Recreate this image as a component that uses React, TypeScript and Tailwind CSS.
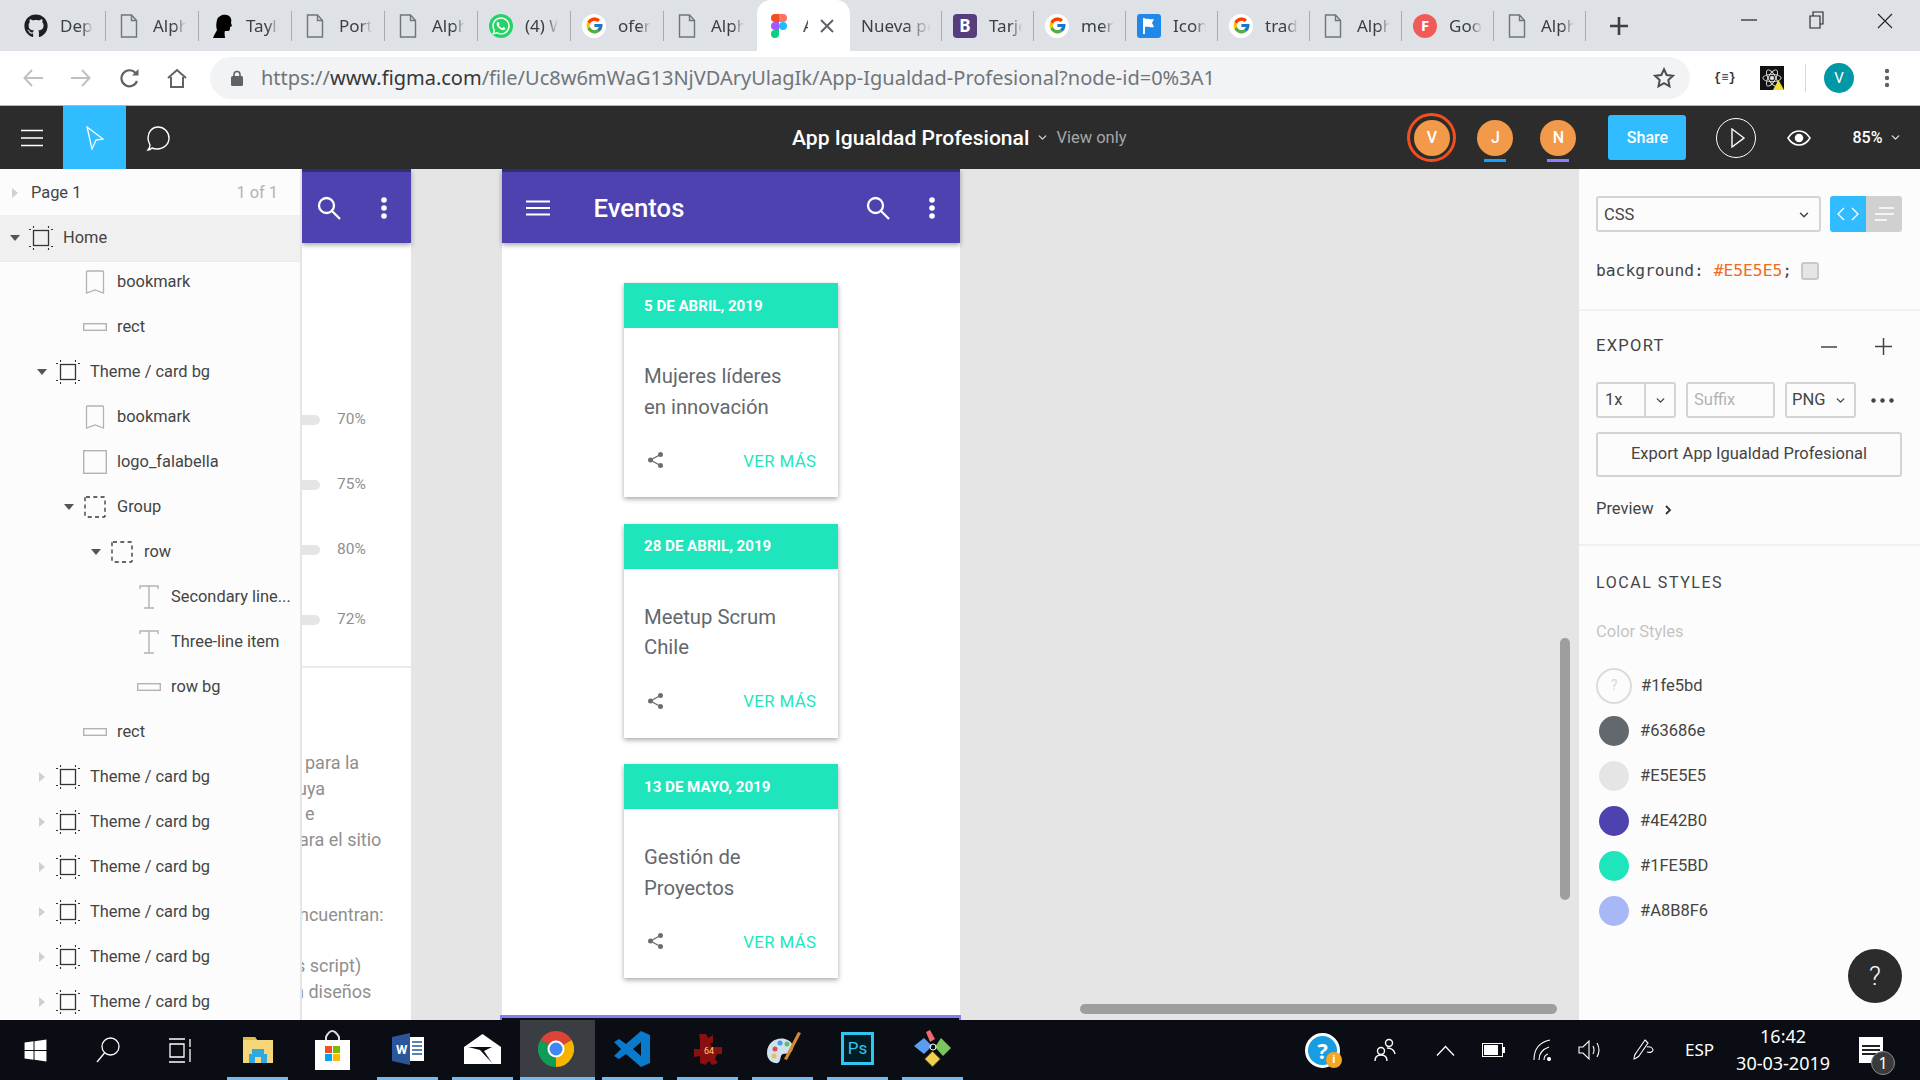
import React from "react";
import { FaGithub, FaWhatsapp, FaWindows } from "react-icons/fa";
import { FcGoogle } from "react-icons/fc";
import { ChevronDown } from "lucide-react";

const FileIco = () => (
  <svg width="18" height="24" viewBox="0 0 18 24" fill="none" stroke="#70757a" strokeWidth="1.4" className="ml-[3px] mr-[3px]">
    <path d="M1.5 1h10l5 5.500V23h-15z" /><path d="M11.500 1v5.500h5" />
  </svg>
);
const G = () => (<span className="flex h-6 w-6 items-center justify-center rounded-full bg-white"><FcGoogle size={19} /></span>);
const Figma = () => (
  <svg width="24" height="24" viewBox="0 0 16 24">
    <path d="M8 0H4a4 4 0 0 0 0 8h4z" fill="#f24e1e" /><path d="M8 0h4a4 4 0 0 1 0 8H8z" fill="#ff7262" />
    <path d="M8 8H4a4 4 0 0 0 0 8h4z" fill="#a259ff" /><circle cx="12" cy="12" r="4" fill="#1abcfe" />
    <path d="M8 16H4a4 4 0 1 0 4 4z" fill="#0acf83" />
  </svg>
);
const Silhouette = () => (
  <svg width="24" height="24" viewBox="0 0 24 24"><path d="M3 24c1-3 3-6 4-8-1-3-1-6 0-10 1-4 6-6 10-5 4 1 5 5 4 8l1 3-2 1c0 2 0 4-2 4h-3c-1 2 0 5 0 7z" fill="#000" /></svg>
);

type Tab = { icon: React.ReactNode; title: string };
const leftTabs: Tab[] = [
  { icon: <FaGithub size={24} color="#1b1f23" />, title: "Dependabot" },
  { icon: <FileIco />, title: "Alpha" },
  { icon: <Silhouette />, title: "Taylor" },
  { icon: <FileIco />, title: "Portafolio" },
  { icon: <FileIco />, title: "Alpha" },
  { icon: <span className="flex h-6 w-6 items-center justify-center rounded-full bg-[#25d366]"><FaWhatsapp size={20} color="#fff" /></span>, title: "(4) WhatsApp" },
  { icon: <G />, title: "oferta" },
  { icon: <FileIco />, title: "Alpha" },
];
const rightTabs: Tab[] = [
  { icon: <span className="flex h-6 w-6 items-center justify-center rounded-[4px] bg-[#563d7c] text-[17px] font-bold text-white">B</span>, title: "Tarjetas" },
  { icon: <G />, title: "mermaid" },
  { icon: <span className="flex h-6 w-6 items-center justify-center rounded-[3px] bg-[#2088e8]"><svg width="16" height="18" viewBox="0 0 16 18" fill="#fff"><path d="M2 1h2v16H2z" /><path d="M4 2c3-1 5 1 9 0l-2 4 2 4c-4 1-6-1-9 0z" /></svg></span>, title: "Icons" },
  { icon: <G />, title: "traducir" },
  { icon: <FileIco />, title: "Alpha" },
  { icon: <span className="flex h-6 w-6 items-center justify-center rounded-full bg-[#f25a5a] text-[15px] font-bold text-white">F</span>, title: "Google" },
  { icon: <FileIco />, title: "Alpha" },
];

const TabTitle = ({ t }: { t: string }) => (
  <span className="w-[33px] overflow-hidden whitespace-nowrap text-[17px] text-[#3c4043] [mask-image:linear-gradient(to_right,black_65%,transparent)]">{t}</span>
);

function TabStrip() {
  return (
    <div className="flex h-[51px] items-end bg-[#dee1e6] pl-[13px] font-[family-name:'Noto_Sans',sans-serif]">
      {leftTabs.map((t, i) => (
        <div key={i} className="relative flex h-[51px] w-[93px] items-center gap-[12px] pl-[11px]">
          {t.icon}
          <TabTitle t={t.title} />
          {i < 7 && <span className="absolute right-0 top-[11px] h-[30px] w-[1.5px] bg-[#a9acb0]" />}
        </div>
      ))}
      <div className="flex h-[51px] w-[93px] items-center rounded-t-[14px] bg-white pl-[10px]">
        <Figma />
        <span className="ml-[12px] w-[5px] overflow-hidden text-[17px] text-[#3c4043]">A</span>
        <svg width="14" height="14" viewBox="0 0 14 14" stroke="#5f6368" strokeWidth="2" className="ml-[12px]"><path d="M1 1l12 12M13 1L1 13" /></svg>
      </div>
      <div className="relative flex h-[51px] w-[92px] items-center pl-[11px]">
        <span className="w-[70px] overflow-hidden whitespace-nowrap text-[17px] text-[#3c4043] [mask-image:linear-gradient(to_right,black_65%,transparent)]">Nueva pestaña</span>
        <span className="absolute right-0 top-[11px] h-[30px] w-[1.5px] bg-[#a9acb0]" />
      </div>
      {rightTabs.map((t, i) => (
        <div key={i} className="relative flex h-[51px] w-[92px] items-center gap-[12px] pl-[11px]">
          {t.icon}
          <TabTitle t={t.title} />
          <span className="absolute right-0 top-[11px] h-[30px] w-[1.5px] bg-[#a9acb0]" />
        </div>
      ))}
      <svg width="20" height="20" viewBox="0 0 20 20" stroke="#3c4043" strokeWidth="2.600" className="mb-[15px] ml-[23px]"><path d="M10 1v18M1 10h18" /></svg>
      <svg width="16" height="2" viewBox="0 0 16 2" className="mb-[30px] ml-[112px]"><path d="M0 1h16" stroke="#222" strokeWidth="1.200" /></svg>
      <svg width="16" height="18" viewBox="0 0 16 18" fill="none" stroke="#222" strokeWidth="1.100" className="mb-[22px] ml-[52px]"><path d="M1 5h10v12H1zM4 5V1h10v12h-3" /></svg>
      <svg width="16" height="16" viewBox="0 0 16 16" stroke="#222" strokeWidth="1.100" className="mb-[22px] ml-[52px]"><path d="M1 1l14 14M15 1L1 15" /></svg>
    </div>
  );
}

function AddressBar() {
  return (
    <div className="flex h-[55px] items-center border-b border-[#b5b5b5] bg-white">
      <svg width="20" height="18" viewBox="0 0 20 18" fill="none" stroke="#bdc1c6" strokeWidth="2" className="ml-[23px]"><path d="M20 9H2M9 1L1.500 9 9 17" /></svg>
      <svg width="20" height="18" viewBox="0 0 20 18" fill="none" stroke="#bdc1c6" strokeWidth="2" className="ml-[28px]"><path d="M0 9h18M11 1l7.500 8-7.500 8" /></svg>
      <svg width="21" height="21" viewBox="0 0 21 21" fill="none" stroke="#5f6368" strokeWidth="2.200" className="ml-[28px]"><path d="M18 13a8 8 0 1 1-1.500-8" /><path d="M19.500 1v6.500H13z" fill="#5f6368" stroke="none" /></svg>
      <svg width="20" height="20" viewBox="0 0 20 20" fill="none" stroke="#5f6368" strokeWidth="2" className="ml-[27px]"><path d="M1 10l9-8 9 8M4 9v10h12V9" /></svg>
      <div className="ml-[23px] flex h-[42px] w-[1480px] items-center rounded-full bg-[#f1f3f4] pl-[21px]">
        <svg width="12" height="16" viewBox="0 0 12 16"><path d="M3 7V4.500a3 3 0 0 1 6 0V7" fill="none" stroke="#5f6368" strokeWidth="1.600" /><rect x="0" y="6" width="12" height="10" rx="1.500" fill="#5f6368" /></svg>
        <span className="ml-[18px] whitespace-nowrap text-[20px] text-[#70757a] font-[family-name:'Noto_Sans',sans-serif]">
          https://<span className="text-[#35373a]">www.figma.com</span>/file/Uc8w6mWaG13NjVDAryUlagIk/App-Igualdad-Profesional?node-id=0%3A1
        </span>
        <svg width="22" height="22" viewBox="0 0 24 24" fill="none" stroke="#4a4d51" strokeWidth="2.200" className="ml-auto mr-[15px]"><path d="M12 2.500l2.900 6.300 6.800.8-5 4.700 1.300 6.800-6-3.400-6 3.400 1.300-6.800-5-4.700 6.800-.8z" /></svg>
      </div>
      <span className="ml-[24px] w-[20px] text-center text-[12px] font-bold text-[#333] font-[family-name:'Liberation_Mono',monospace]">{"{≡}"}</span>
      <span className="relative ml-[26px] flex h-[24px] w-[24px] items-center justify-center bg-[#111]">
        <svg width="22" height="22" viewBox="0 0 24 24" fill="none" stroke="#ddd" strokeWidth="1"><ellipse cx="12" cy="12" rx="10" ry="4" /><ellipse cx="12" cy="12" rx="10" ry="4" transform="rotate(60 12 12)" /><ellipse cx="12" cy="12" rx="10" ry="4" transform="rotate(120 12 12)" /><circle cx="12" cy="12" r="2" fill="#ddd" /></svg>
        <svg width="11" height="10" viewBox="0 0 11 10" className="absolute bottom-0 right-0"><path d="M5.500 0L11 10H0z" fill="#f5dd3a" /></svg>
      </span>
      <span className="ml-[21px] h-[28px] w-px bg-[#d8d8d8]" />
      <span className="ml-[18px] flex h-[30px] w-[30px] items-center justify-center rounded-full bg-[#0097a7] text-[15px] text-white">V</span>
      <svg width="6" height="20" viewBox="0 0 6 20" fill="#5f6368" className="ml-[30px]"><circle cx="3" cy="3" r="2.200" /><circle cx="3" cy="10" r="2.200" /><circle cx="3" cy="17" r="2.200" /></svg>
    </div>
  );
}

const Avatar = ({ l, bar }: { l: string; bar: string }) => (
  <div className="relative flex h-9 w-9 items-center justify-center rounded-full bg-[#f2994a] text-[16px] font-medium text-white">
    {l}
    <span className={`absolute -bottom-[6px] left-[7px] h-[3px] w-[22px] ${bar}`} />
  </div>
);

function FigmaBar() {
  return (
    <div className="flex h-[63px] items-center bg-[#2c2c2c] text-white">
      <svg width="22" height="18" viewBox="0 0 22 18" stroke="#fff" strokeWidth="1.400" className="ml-[21px]"><path d="M0 1.500h22M0 9h22M0 16.500h22" /></svg>
      <div className="ml-[20px] flex h-full w-[63px] items-center justify-center bg-[#30bcff]">
        <svg width="20" height="24" viewBox="0 0 20 24" fill="none" stroke="#fff" strokeWidth="1.300"><path d="M2 1l16 12-7 1-4 9z" /></svg>
      </div>
      <svg width="26" height="26" viewBox="0 0 26 26" fill="none" stroke="#fff" strokeWidth="1.400" className="ml-[19px]"><path d="M3 25c2 0 3-1 4-2 2 1 3 1 5 1 7 0 12-5 12-11S19 2 13 2 3 7 3 13c0 3 1 5 2 7 0 2-1 4-2 5z" /></svg>
      <span className="ml-[621px] whitespace-nowrap text-[21.100px] font-medium">App Igualdad Profesional</span>
      <ChevronDown size={13} strokeWidth={2.500} className="ml-[7px] text-[#cfcfcf]" />
      <span className="ml-[7px] mt-[1px] text-[16.500px] text-[#a6a6a6]">View only</span>
      <div className="ml-[281px] flex h-[49px] w-[49px] items-center justify-center rounded-full border-[3px] border-[#f24e1e]">
        <div className="flex h-9 w-9 items-center justify-center rounded-full bg-[#f2994a] text-[16px] font-medium text-white">V</div>
      </div>
      <div className="ml-[21px]"><Avatar l="J" bar="bg-[#18a0fb]" /></div>
      <div className="ml-[27px]"><Avatar l="N" bar="bg-[#907cff]" /></div>
      <div className="ml-[32px] flex h-[45px] w-[78px] items-center justify-center rounded-[3px] bg-[#30bcff] text-[16px] font-medium">Share</div>
      <div className="ml-[30px] flex h-[40px] w-[40px] items-center justify-center rounded-full border-[1.500px] border-white">
        <svg width="14" height="20" viewBox="0 0 14 20" fill="none" stroke="#fff" strokeWidth="1.400" className="ml-[3px]"><path d="M1 1l12 9-12 9z" /></svg>
      </div>
      <svg width="24" height="18" viewBox="0 0 24 18" fill="none" stroke="#fff" strokeWidth="1.500" className="ml-[31px]"><path d="M1 9c3-5 7-7 11-7s8 2 11 7c-3 5-7 7-11 7S4 14 1 9z" /><circle cx="12" cy="9" r="3.500" fill="#fff" /></svg>
      <span className="ml-[41px] text-[16px] font-medium">85%</span>
      <ChevronDown size={13} strokeWidth={2.500} className="ml-[7px] text-[#dcdcdc]" />
    </div>
  );
}

type Kind = "frame" | "book" | "rect" | "img" | "group" | "text";
const LayerIcon = ({ k }: { k: Kind }) => {
  if (k === "frame")
    return (
      <svg width="24" height="24" viewBox="0 0 24 24" fill="none" stroke="#333">
        <rect x="4.500" y="4.500" width="15" height="15" strokeWidth="1.300" />
        <path d="M0 3.500h2M22 3.500h2M0 20.500h2M22 20.500h2M4.500 0v2M19.500 0v2M4.500 22v2M19.500 22v2" strokeWidth="1.100" />
      </svg>
    );
  if (k === "book") return <svg width="20" height="24" viewBox="0 0 20 24" fill="none" stroke="#b3b3b3" strokeWidth="1.300"><path d="M1.500 2q0-1 1-1h15q1 0 1 1v21l-8.500-3-8.500 3z" /></svg>;
  if (k === "rect") return <svg width="24" height="8" viewBox="0 0 24 8" fill="none" stroke="#b3b3b3" strokeWidth="1.400"><rect x="0.700" y="0.700" width="22.600" height="6.600" /></svg>;
  if (k === "img") return <svg width="24" height="24" viewBox="0 0 24 24" fill="none" stroke="#b3b3b3" strokeWidth="1.400"><rect x="0.700" y="0.700" width="22.600" height="22.600" /></svg>;
  if (k === "group") return <svg width="22" height="22" viewBox="0 0 22 22" fill="none" stroke="#333" strokeWidth="1.300" strokeDasharray="4 3.300"><rect x="1" y="1" width="20" height="20" rx="1" /></svg>;
  return <svg width="20" height="24" viewBox="0 0 20 24" fill="none" stroke="#b3b3b3" strokeWidth="1.400"><path d="M1 4V1h18v3M10 1v22M5 23h10" /></svg>;
};

const depths = ["pl-[3px]", "pl-[30px]", "pl-[57px]", "pl-[84px]", "pl-[111px]"];
type Row = { d: number; k: Kind; t: string; a?: "open" | "closed" };
const rows: Row[] = [
  { d: 2, k: "book", t: "bookmark" },
  { d: 2, k: "rect", t: "rect" },
  { d: 1, k: "frame", t: "Theme / card bg", a: "open" },
  { d: 2, k: "book", t: "bookmark" },
  { d: 2, k: "img", t: "logo_falabella" },
  { d: 2, k: "group", t: "Group", a: "open" },
  { d: 3, k: "group", t: "row", a: "open" },
  { d: 4, k: "text", t: "Secondary line..." },
  { d: 4, k: "text", t: "Three-line item" },
  { d: 4, k: "rect", t: "row bg" },
  { d: 2, k: "rect", t: "rect" },
  ...Array.from({ length: 6 }, () => ({ d: 1, k: "frame" as Kind, t: "Theme / card bg", a: "closed" as const })),
];

const Arrow = ({ a }: { a?: "open" | "closed" }) => (
  <span className="flex w-[24px] justify-center">
    {a === "open" && <svg width="10" height="6" viewBox="0 0 10 6"><path d="M0 0h10L5 6z" fill="#555" /></svg>}
    {a === "closed" && <svg width="6" height="10" viewBox="0 0 6 10"><path d="M0 0v10l6-5z" fill="#d0d0d0" /></svg>}
  </span>
);

function LeftPanel() {
  return (
    <div className="relative z-10 w-[302px] shrink-0 overflow-hidden border-r-2 border-[#e5e5e5] bg-[#fcfcfc] text-[16.400px] text-[#444]">
      <div className="flex h-[46px] items-center pl-[3px] pt-[2px]">
        <Arrow a="closed" />
        <span className="ml-[4px]">Page 1</span>
        <span className="ml-auto mr-[22px] text-[#b3b3b3]">1 of 1</span>
      </div>
      <div className="-mb-[3px] flex h-[47px] items-center border-b border-[#ebebeb] bg-[#f0f0f0] pl-[3px]">
        <Arrow a="open" />
        <span className="flex w-[28px] justify-center"><LayerIcon k="frame" /></span>
        <span className="ml-[8px] mt-[1px]">Home</span>
      </div>
      {rows.map((r, i) => (
        <div key={i} className={`flex h-[45px] items-center ${depths[r.d]}`}>
          <Arrow a={r.a} />
          <span className="flex w-[28px] justify-center"><LayerIcon k={r.k} /></span>
          <span className="ml-[8px] mt-[2px] whitespace-nowrap">{r.t}</span>
        </div>
      ))}
    </div>
  );
}

const Search = () => (
  <svg width="24" height="24" viewBox="0 0 24 24" fill="none" stroke="#fff" strokeWidth="2.300"><circle cx="9.500" cy="9.500" r="7.500" /><path d="M15 15l8 8" /></svg>
);
const Dots = () => (
  <svg width="6" height="22" viewBox="0 0 6 22" fill="#fff"><circle cx="3" cy="3" r="2.800" /><circle cx="3" cy="11" r="2.800" /><circle cx="3" cy="19" r="2.800" /></svg>
);

const Pct = ({ v, cls }: { v: string; cls: string }) => (
  <div className={`flex h-[20px] items-center ${cls}`}>
    <span className="h-[10px] w-[18px] rounded-r-full bg-[#e5e5e5]" />
    <span className="ml-[17px] text-[15.500px] text-[#8f8f8f]">{v}</span>
  </div>
);

const Card = ({ date, l1, l2 }: { date: string; l1: string; l2: string }) => (
  <div className="mb-[26.500px] h-[214px] w-[214px] bg-white shadow-[0_2px_5px_rgba(0,0,0,0.35)]">
    <div className="flex h-[45px] items-center bg-[#1fe5bd] pl-[20.500px] pt-[1px] text-[15.100px] font-bold text-white">{date}</div>
    <div className="pl-[20.500px] pt-[33px] text-[20.300px] leading-[30.600px] text-[#63686e]">
      <div>{l1}</div>
      <div>{l2}</div>
    </div>
    <div className="mt-[26.500px] flex items-center pl-[24px] pr-[21px]">
      <svg width="15" height="16" viewBox="0 0 15 16" fill="#6b6f73" className="-mt-[2px]"><circle cx="12.500" cy="2.500" r="2.500" /><circle cx="2.500" cy="8" r="2.500" /><circle cx="12.500" cy="13.500" r="2.500" /><path d="M12.500 2.500L2.500 8l10 5.500" fill="none" stroke="#6b6f73" strokeWidth="1.400" /></svg>
      <span className="ml-auto text-[16.800px] tracking-[0.4px] text-[#1fe5bd]">VER MÁS</span>
    </div>
  </div>
);

function Canvas() {
  return (
    <div className="relative min-w-0 flex-1 overflow-hidden bg-[#e5e5e5]">
      {/* artboard cut off by the layers panel */}
      <div className="absolute left-0 top-0 h-full w-[109px] bg-white">
        <div className="flex h-[74px] items-center border-t-[3px] border-[#332c7a] bg-[#4e42b0] pl-[15px] shadow-[0_2px_5px_rgba(0,0,0,0.35)]">
          <Search />
          <span className="ml-[40px]"><Dots /></span>
        </div>
        <Pct v="70%" cls="mt-[167px]" />
        <Pct v="75%" cls="mt-[45px]" />
        <Pct v="80%" cls="mt-[45px]" />
        <Pct v="72%" cls="mt-[50px]" />
        <div className="mt-[36px] h-[2px] bg-[#ebebeb]" />
        <div className="relative overflow-hidden pl-[3px] pt-[81px] text-[18px] text-[#8f8f8f]">
          <div className="h-[25.500px] whitespace-nowrap">para la</div>
          <div className="-ml-[8px] h-[25.500px] whitespace-nowrap">uya</div>
          <div className="h-[25.500px]">e</div>
          <div className="-ml-[6px] h-[25.500px] whitespace-nowrap">ara el sitio</div>
          <div className="-ml-[6px] mt-[50px] h-[25.500px] whitespace-nowrap">ncuentran:</div>
          <div className="-ml-[9px] mt-[25.500px] h-[25.500px] whitespace-nowrap">s script)</div>
          <div className="-ml-[11px] h-[25.500px] whitespace-nowrap">n diseños</div>
        </div>
      </div>
      {/* main artboard */}
      <div className="absolute left-[199.500px] top-0 h-full w-[458px] bg-white">
        <div className="flex h-[74px] items-center border-t-[3px] border-[#332c7a] bg-[#4e42b0] pt-[1px] shadow-[0_2px_5px_rgba(0,0,0,0.35)]">
          <svg width="24" height="16" viewBox="0 0 24 16" stroke="#fff" strokeWidth="2" className="ml-[24px]"><path d="M0 1.500h24M0 8h24M0 14.500h24" /></svg>
          <span className="ml-[44px] text-[25.700px] font-medium text-white">Eventos</span>
          <span className="ml-auto"><Search /></span>
          <span className="ml-[39px] mr-[25px]"><Dots /></span>
        </div>
        <div className="flex flex-col items-center pt-[40px]">
          <Card date="5 DE ABRIL, 2019" l1="Mujeres líderes" l2="en innovación" />
          <Card date="28 DE ABRIL, 2019" l1="Meetup Scrum" l2="Chile" />
          <Card date="13 DE MAYO, 2019" l1="Gestión de" l2="Proyectos" />
        </div>
      </div>
      <div className="absolute bottom-0 left-[198px] h-[5px] w-[461px] border-t-[3px] border-x-2 border-[#8a7bf5] bg-[#0a0d14]" />
      <div className="absolute left-[1258px] top-[469px] h-[262px] w-[10px] rounded-full bg-[#9e9e9e]" />
      <div className="absolute left-[778px] top-[835px] h-[10px] w-[477px] rounded-full bg-[#9e9e9e]" />
    </div>
  );
}

const Swatch = ({ c, t }: { c: string; t: string }) => (
  <div className="flex h-[45px] items-center">
    <span className={`ml-[3px] h-[30px] w-[30px] rounded-full ${c}`} />
    <span className="ml-[11px] mt-[1px]">{t}</span>
  </div>
);
const Field = "flex h-[36px] items-center rounded-[3px] border-2 border-[#d4d4d4]";

function RightPanel() {
  return (
    <div className="relative w-[341px] shrink-0 bg-[#fcfcfc] text-[16.500px] text-[#444]">
      <div className="h-[142px] border-b-2 border-[#f0f0f0] pl-[17px] pt-[27px]">
        <div className="flex">
          <div className={`${Field} w-[225px] pl-[6px] pr-[8px] pt-[2px]`}>
            CSS
            <ChevronDown size={14} strokeWidth={2.500} className="ml-auto" />
          </div>
          <div className="ml-[9px] flex h-[36px] w-[72px] overflow-hidden rounded-[3px]">
            <div className="flex w-[36px] items-center justify-center bg-[#30bcff]">
              <svg width="22" height="14" viewBox="0 0 22 14" fill="none" stroke="#fff" strokeWidth="1.300"><path d="M7 1L1 7l6 6M15 1l6 6-6 6" /></svg>
            </div>
            <div className="flex w-[36px] items-center justify-center bg-[#d0d0d0]">
              <svg width="19" height="14" viewBox="0 0 19 14" stroke="#fff" strokeWidth="1.300"><path d="M4 1h15M0 7h19M0 13h12" /></svg>
            </div>
          </div>
        </div>
        <div className="mt-[30px] flex h-[18px] items-center whitespace-pre text-[16.300px] text-[#444] font-[family-name:'DejaVu_Sans_Mono',monospace]">
          {"background: "}<span className="text-[#f26a21]">#E5E5E5</span>;
          <span className="ml-[9px] h-[18px] w-[18px] rounded-[3px] border-2 border-[#c8c8c8] bg-[#e5e5e5]" />
        </div>
      </div>
      <div className="h-[235px] border-b-2 border-[#f0f0f0] pl-[17px]">
        <div className="flex h-[71px] items-center">
          <span className="tracking-[1.300px]">EXPORT</span>
          <svg width="16" height="2" viewBox="0 0 16 2" className="ml-[156px]"><path d="M0 1h16" stroke="#444" strokeWidth="1.500" /></svg>
          <svg width="17" height="17" viewBox="0 0 17 17" stroke="#444" strokeWidth="1.500" className="ml-[38px]"><path d="M8.500 0v17M0 8.500h17" /></svg>
        </div>
        <div className="flex h-[36px] items-center">
          <div className={`${Field} w-[80px]`}>
            <span className="w-[48px] border-r-2 border-[#d4d4d4] pl-[7px] leading-[32px]">1x</span>
            <ChevronDown size={13} strokeWidth={2.500} className="ml-[8px]" />
          </div>
          <div className={`${Field} ml-[10px] w-[89px] pl-[6px] text-[#b3b3b3]`}>Suffix</div>
          <div className={`${Field} ml-[10px] w-[71px] pl-[5px]`}>
            PNG
            <ChevronDown size={13} strokeWidth={2.500} className="ml-[9px]" />
          </div>
          <svg width="23" height="5" viewBox="0 0 23 5" fill="#444" className="ml-[15px]"><circle cx="2.500" cy="2.500" r="2.200" /><circle cx="11.500" cy="2.500" r="2.200" /><circle cx="20.500" cy="2.500" r="2.200" /></svg>
        </div>
        <div className="mt-[14px] flex h-[45px] w-[306px] items-center justify-center rounded-[3px] border-2 border-[#d4d4d4]">Export App Igualdad Profesional</div>
        <div className="mt-[18px] flex h-[28px] items-center">
          Preview
          <svg width="7" height="10" viewBox="0 0 7 10" fill="none" stroke="#333" strokeWidth="1.800" className="ml-[11px] mt-[2px]"><path d="M1 1l4 4-4 4" /></svg>
        </div>
      </div>
      <div className="pl-[17px] pt-[23px]">
        <div className="text-[16px] leading-[28px] tracking-[1.550px]">LOCAL STYLES</div>
        <div className="mt-[21px] leading-[28px] text-[#c4c4c4]">Color Styles</div>
        <div className="mt-[17px]">
          <div className="flex h-[45px] items-center">
            <span className="flex h-9 w-9 items-center justify-center rounded-full border-2 border-[#dcdcdc] text-[14px] text-[#d8d8d8]">?</span>
            <span className="ml-[9px] mt-[1px]">#1fe5bd</span>
          </div>
          <Swatch c="bg-[#63686e]" t="#63686e" />
          <Swatch c="bg-[#e5e5e5]" t="#E5E5E5" />
          <Swatch c="bg-[#4e42b0]" t="#4E42B0" />
          <Swatch c="bg-[#1fe5bd]" t="#1FE5BD" />
          <Swatch c="bg-[#a8b8f6]" t="#A8B8F6" />
        </div>
      </div>
      <div className="absolute bottom-[17px] left-[269px] flex h-[54px] w-[54px] items-center justify-center rounded-full bg-[#2c2c2c] text-[26px] font-light text-white">?</div>
    </div>
  );
}

const Cell = ({ children }: { children: React.ReactNode }) => (
  <div className="flex h-full w-[75px] items-center justify-center">
    <div className="flex h-full w-[61px] items-center justify-center border-b-[3px] border-[#76b9ed]">{children}</div>
  </div>
);

function Taskbar() {
  return (
    <div className="flex h-[60px] items-center bg-[#0a0d14] text-white font-[family-name:'Noto_Sans',sans-serif]">
      <span className="ml-[23px]"><FaWindows size={25} /></span>
      <svg width="24" height="26" viewBox="0 0 24 26" fill="none" stroke="#fff" strokeWidth="1.300" className="ml-[48px]"><circle cx="14.500" cy="9.500" r="8.500" /><path d="M8.500 16L1 25" /></svg>
      <svg width="24" height="26" viewBox="0 0 24 26" fill="none" stroke="#fff" strokeWidth="1.300" className="ml-[48px]"><path d="M1 2h16M1 25h16M2 7h14v13H2zM22 2v8M22 12v13" /></svg>
      <div className="ml-[28px] flex h-full">
        <Cell>
          <svg width="32" height="32" viewBox="0 0 32 32"><path d="M1 4h12l2 3h16v23H1z" fill="#f5d77a" /><path d="M1 4h12l2 3H1z" fill="#e8b93e" /><path d="M10 16h12v5h3v9h-6v-6h-6v6H7v-9h3z" fill="#2fa8e0" /></svg>
        </Cell>
        <div className="flex h-full w-[75px] items-center justify-center">
          <svg width="35" height="40" viewBox="0 0 35 40"><path d="M11 11V7q6-12 13 0v4" fill="none" stroke="#ddd" strokeWidth="2" /><path d="M0 10h35v30H0z" fill="#fff" /><path d="M10 16h7v7h-7z" fill="#f25022" /><path d="M18 16h7v7h-7z" fill="#7fba00" /><path d="M10 24h7v7h-7z" fill="#00a4ef" /><path d="M18 24h7v7h-7z" fill="#ffb900" /></svg>
        </div>
        <Cell>
          <svg width="32" height="32" viewBox="0 0 32 32"><path d="M18 0v32L0 28V4z" fill="#2b579a" /><path d="M18 4h14v24H18z" fill="#fff" /><path d="M20 9h10M20 13h10M20 17h10M20 21h10" stroke="#2b579a" strokeWidth="1.600" /><text x="4" y="21" fontSize="13" fontWeight="700" fill="#fff" fontFamily="Roboto">W</text></svg>
        </Cell>
        <Cell>
          <svg width="37" height="30" viewBox="0 0 37 30"><path d="M18.500 0L37 13v17H0V13z" fill="#fff" /><path d="M4 13h24l-8 4 8 12-12-13z" fill="#0a0d14" /></svg>
        </Cell>
        <div className="flex h-full w-[75px] items-center justify-center border-b-[3px] border-[#76b9ed] bg-[#3a3d42] pr-[3px]">
          <svg width="36" height="36" viewBox="2 2 36 36">
            <path d="M20 20L4.400 11A18 18 0 0 1 35.600 11Z" fill="#db4437" /><path d="M20 20L35.600 11A18 18 0 0 1 20 38Z" fill="#f4b400" /><path d="M20 20L20 38A18 18 0 0 1 4.400 11Z" fill="#0f9d58" />
            <circle cx="20" cy="20" r="8.500" fill="#fff" /><circle cx="20" cy="20" r="6.500" fill="#4285f4" />
          </svg>
        </div>
        <Cell>
          <svg width="37" height="36" viewBox="0 0 37 36" fill="#0a7acc"><path d="M27 0l9 4v28l-9 4-15-13-7 5-5-3 7-7-7-7 5-3 7 5zM27 11l-8 7 8 7z" fillRule="evenodd" /></svg>
        </Cell>
        <Cell>
          <svg width="34" height="36" viewBox="0 0 34 36"><path d="M8 3h7l2 4 5-3v8h-3l2 4h10v7h-5l-2 5 3 4-6 2-3-4-4 4-5-2v-7l-6 1v-8h6V9z" fill="#8a1010" /><text x="13" y="23" fontSize="9" fill="#f5d76e" fontFamily="Roboto">64</text></svg>
        </Cell>
        <Cell>
          <svg width="36" height="36" viewBox="0 0 36 36"><path d="M2 22C2 11 12 6 20 8c8 2 10 9 6 13-3 3-8 0-10 4-1 4-1 8-6 7-5-1-8-5-8-10z" fill="#cfe2ee" /><circle cx="10" cy="18" r="2.500" fill="#e04b4b" /><circle cx="15" cy="12" r="2.500" fill="#4b9be0" /><circle cx="22" cy="13" r="2.500" fill="#5cc06a" /><circle cx="9" cy="25" r="2.500" fill="#e8c24b" /><path d="M33 1l3 1-14 27-3-1z" fill="#d98a2b" /></svg>
        </Cell>
        <Cell>
          <div className="flex h-[33px] w-[33px] items-center justify-center border-[3px] border-[#31c5f4] bg-[#001d26] text-[17px] text-[#31c5f4] font-[family-name:Roboto,sans-serif]">Ps</div>
        </Cell>
        <Cell>
          <svg width="37" height="37" viewBox="0 0 37 37"><path d="M12 2l4-2 5 9-5 3z" fill="#ef6b6b" /><path d="M10 8l8 8-8 8-10-8z" fill="#5b9df0" /><path d="M27 8l10 10-8 8-8-9z" fill="#7cc45b" /><path d="M18.500 21l8 8-8 8-8-8z" fill="#f2cf4a" stroke="#222" /><circle cx="19" cy="17" r="3" fill="none" stroke="#fff" /></svg>
        </Cell>
      </div>
      <span className="relative ml-[335px] flex h-[35px] w-[35px] items-center justify-center rounded-full border-[3px] border-white bg-[#1a9ce0] text-[22px] font-bold text-white">
        ?
        <span className="absolute -bottom-[3px] -right-[5px] flex h-[16px] w-[16px] items-center justify-center rounded-full bg-[#f5a623] text-[11px]">i</span>
      </span>
      <svg width="22" height="24" viewBox="0 0 22 24" fill="none" stroke="#fff" strokeWidth="1.400" className="ml-[34px]"><circle cx="7" cy="13" r="3.500" /><path d="M1 23c0-4 2-6 6-6s6 2 6 6" /><circle cx="15" cy="5" r="3.500" /><path d="M13 10c4 0 7 1 8 6" /></svg>
      <svg width="19" height="11" viewBox="0 0 19 11" fill="none" stroke="#fff" strokeWidth="1.300" className="ml-[40px]"><path d="M1 10.500l8.500-9 8.500 9" /></svg>
      <svg width="23" height="14" viewBox="0 0 23 14" className="ml-[27px]"><rect x="0.500" y="0.500" width="20" height="13" fill="none" stroke="#fff" /><rect x="2" y="2" width="14" height="10" fill="#fff" /><path d="M21 4h2v6h-2z" fill="#fff" /></svg>
      <svg width="18" height="22" viewBox="0 0 18 22" fill="none" stroke="#fff" strokeWidth="1.100" className="ml-[28px]"><path d="M1 21C1 10 7 3 17 1M6 21c0-7 4-11 10-13M11 21c0-3 1-5 4-6" /><circle cx="16" cy="20" r="1.500" fill="#fff" /></svg>
      <svg width="23" height="22" viewBox="0 0 23 22" fill="none" stroke="#fff" strokeWidth="1.100" className="ml-[27px]"><path d="M1 8h4l6-6v18l-6-6H1zM15 7q2 4 0 8M19 4q4 7 0 14" /></svg>
      <svg width="21" height="22" viewBox="0 0 21 22" fill="none" stroke="#fff" strokeWidth="1.100" className="ml-[32px]"><path d="M12 1l3 3-9 13c-2 2-5 3-5 3s0-4 2-6zM14 8c3-1 6 1 6 3s-3 3-6 2" /></svg>
      <span className="ml-[31px] text-[17px]">ESP</span>
      <div className="ml-[21px] flex w-[96px] flex-col items-center text-[18px] leading-[27px]">
        <span>16:42</span>
        <span className="whitespace-nowrap">30-03-2019</span>
      </div>
      <span className="relative ml-[28px] flex h-[26px] w-[24px] flex-col justify-center gap-[2px] bg-white px-[3px]">
        <span className="h-[2px] bg-[#222]" /><span className="h-[2px] bg-[#222]" /><span className="h-[2px] bg-[#222]" />
        <span className="absolute -bottom-[12px] -right-[12px] flex h-[24px] w-[24px] items-center justify-center rounded-full border border-[#888] bg-[#3a3a3a] text-[16px] text-white">1</span>
      </span>
    </div>
  );
}

export default function App() {
  return (
    <div className="flex h-[1080px] w-[1920px] flex-col overflow-hidden font-[family-name:Roboto,sans-serif]">
      <TabStrip />
      <AddressBar />
      <FigmaBar />
      <div className="flex h-[851px]">
        <LeftPanel />
        <Canvas />
        <RightPanel />
      </div>
      <Taskbar />
    </div>
  );
}
